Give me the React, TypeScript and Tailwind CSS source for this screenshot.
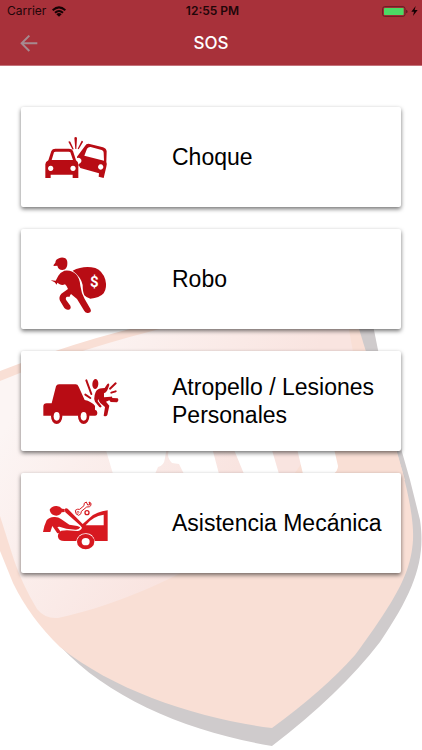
import type { ReactNode } from "react";

function CrashIcon() {
  return (
    <g fill="#b80c14" transform="translate(0 9)">
      <path
        fillRule="evenodd"
        d="M46 159V118Q46 110 55 106L64 78Q67 71 76 71H117Q126 71 129 78L138 106Q145 110 145 118V159H128V149H62V159ZM65 105H129L121 82Q120 80 116 80H77Q73 80 72 82ZM62 122a8 8 0 1 0 .1 0ZM129 122a8 8 0 1 0 .1 0Z"
      />
      <path
        fillRule="evenodd"
        d="M141 95L165 63Q169 55 179 57L219 67Q229 70 230 79L229 111Q232 117 229 125L221 159L206 155L207 145L151 129L148 124Q144 125 146 117Q156 113 154 104Q150 97 141 99ZM163 92L222 107L221 83Q221 77 215 75L182 66Q175 65 171 71ZM212 118a8 8 0 1 0 .1 0Z"
      />
      <path d="M133 38Q137 34 141 38L139 72H136ZM115 50Q118 47 121 50L131 72L128 74ZM155 47Q159 47 159 51L146 73L143 71Z" />
    </g>
  );
}

function ThiefIcon() {
  return (
    <g fill="#b80c14" transform="translate(15 18)">
      <path d="M61 38Q62 28 72 25Q81 20 91 25Q98 30 97 42Q97 59 82 60Q70 60 67 47L56 48Q54 45 61 38Z" />
      <path d="M47 91L62 92L70 77Q76 67 88 62Q110 59 123 73Q134 84 136 107Q139 130 149 147L166 176Q171 185 162 188Q153 191 148 183L126 147L108 132Q104 137 104 140L96 140Q90 143 94 151L106 167Q110 176 101 179Q94 181 88 174L75 152Q70 141 79 131L99 117Q96 108 90 103Q82 107 74 103L67 98L65 104L59 97Z" />
      <path d="M113 62Q145 46 181 54Q203 63 211 89Q217 113 206 130Q193 145 166 146Q155 144 148 136Q143 125 143 105Q139 82 113 62Z" />
      <text x="178" y="112" fill="white" textAnchor="middle" fontFamily="Roboto, sans-serif" fontWeight="700" fontSize="45">
        $
      </text>
    </g>
  );
}

function RunOverIcon() {
  return (
    <g fill="#b80c14">
      <path d="M40 147V121Q40 112 50 112H65L78 61Q80 55 87 55H137Q143 55 146 62L164 102Q184 106 195 120V131Q202 132 202 140Q202 149 195 149H40Z" />
      <ellipse cx="80" cy="151" rx="17" ry="23" />
      <ellipse cx="161" cy="151" rx="17" ry="23" />
      <ellipse cx="80" cy="151" rx="9" ry="13" fill="white" />
      <ellipse cx="161" cy="151" rx="9" ry="13" fill="white" />
      <ellipse cx="196" cy="54" rx="9" ry="15" transform="rotate(5 196 54)" />
      <path d="M197 78Q203 67 216 67L224 66L232 54Q237 50 238 57L232 73Q228 80 222 82L222 94L242 92Q247 91 247 96L263 97Q268 103 261 109L242 108L238 103L228 107L238 119L232 147Q228 154 221 149L225 123L211 111Q206 106 205 99L203 105L215 121Q213 126 208 123L195 107Q191 99 194 87Z" />
      <g fill="none" stroke="#b80c14" strokeWidth="6" strokeLinecap="round">
        <path d="M169 43L184 84M166 86L181 96M173 111L190 119M240 68L257 52M244 80L257 76" />
      </g>
    </g>
  );
}

function MechanicIcon() {
  return (
    <g fill="#d71920" transform="translate(0 6)">
      <path d="M59 59Q66 47 80 48Q90 49 96 56L104 57V66L95 67Q92 76 79 77Q65 77 60 64Z" />
      <path d="M39 126Q43 105 50 91Q57 82 72 81Q84 80 93 87L118 104L142 108L151 112Q147 120 136 119L109 116L88 110L82 111L89 121Q91 124 91 128L82 130L67 108L61 126Z" />
      <path d="M104 58Q107 52 113 56L158 102L181 82Q199 65 233 61V153H194Q191 131 168 130Q144 130 139 153H103Q86 153 84 141Q82 129 94 122L111 121L142 123Q153 122 156 113L150 106L106 67Z" />
      <path d="M167 106Q187 79 221 74V106Z" fill="white" />
      <ellipse cx="167" cy="155" rx="26" ry="23" />
      <ellipse cx="167" cy="155" rx="12" ry="11" fill="white" />
      <path
        d="M136 61Q142 56 149 58L162 47Q160 38 169 36L173 45L180 44L177 36Q185 37 183 46Q180 52 170 51L154 64Q155 73 146 76Q135 74 136 61Z"
        fill="white"
        stroke="#d71920"
        strokeWidth="3"
      />
      <circle cx="144" cy="67" r="3" fill="none" stroke="#d71920" strokeWidth="2" />
      <circle cx="171" cy="68" r="6" fill="white" stroke="#d71920" strokeWidth="4" />
    </g>
  );
}

function Shield() {
  return (
    <svg className="absolute inset-x-0 top-0 -z-10 w-full" viewBox="0 0 422 750" aria-hidden="true">
      <defs>
        <linearGradient id="gloss" gradientUnits="userSpaceOnUse" x1="10" y1="420" x2="190" y2="540">
          <stop offset="0" stopColor="#fcf5f4" />
          <stop offset="1" stopColor="#f9e4e0" />
        </linearGradient>
      </defs>
      <path
        fill="#cfcbcc"
        d="M340 310H370L378 350L402 452L410 480L420 520C426 560 414 592 380 642Q340 694 272 746C190 732 110 700 60 646Z"
      />
      <path
        fill="#f9dfd5"
        d="M0 371Q100 332 190 316L355 316L397 452C408 490 414 520 413 540C411 570 400 594 355 655Q324 690 272 728C200 719 116 692 60 647Q30 618 13 583L0 551Z"
      />
      <path
        fill="url(#gloss)"
        d="M0 381Q80 348 180 324L348 324L353 352Q325 460 251 527C200 570 120 605 58 618Q45 619 37 609Q22 584 14 560L0 516Z"
      />
      <path fill="#f9dfd5" d="M318 440L393 440L405 480L290 480Z" />
      <path
        fill="white"
        d="M103 440L168 440L165 458Q164 466 158 467L155 474H113ZM170 440H210L219 474H184L179 464L172 463Q166 457 169 450ZM230 440H269L279 474H244ZM295 440H332L338 466Q338 471 333 474H303Z"
      />
    </svg>
  );
}

const options: { label: string; icon: ReactNode }[] = [
  { label: "Choque", icon: <CrashIcon /> },
  { label: "Robo", icon: <ThiefIcon /> },
  { label: "Atropello / Lesiones Personales", icon: <RunOverIcon /> },
  { label: "Asistencia Mecánica", icon: <MechanicIcon /> },
];

export default function App() {
  return (
    <div className="relative isolate min-h-screen overflow-hidden bg-white font-['Inter',sans-serif] text-black">
      <Shield />
      <header className="border-b border-[#c4727a] bg-[#a8313a]">
        <div className="grid h-[22px] grid-cols-3 items-center pr-1 pl-[7px] text-[#210609]">
          <div className="flex items-center gap-[6px]">
            <span className="text-xs">Carrier</span>
            <svg className="h-[11px] w-[14px]" viewBox="0 0 42 32" aria-hidden="true">
              <g fill="none" stroke="#160204" strokeWidth="6">
                <path d="M2 12Q21-5 40 12M9 20Q21 9 33 20" />
              </g>
              <path fill="#160204" d="M13 24Q21 17 29 24L21 32Z" />
            </svg>
          </div>
          <span className="text-center text-xs font-semibold">12:55 PM</span>
          <div className="flex items-center justify-end gap-[3px]">
            <svg className="h-[11px] w-[26px]" viewBox="0 0 78 33" aria-hidden="true">
              <rect x="2" y="2" width="67" height="29" rx="6" fill="none" stroke="#651c23" strokeWidth="3" />
              <rect x="6" y="6" width="59" height="21" rx="2" fill="#4cd964" />
              <path fill="#651c23" d="M72 11Q77 12 77 17Q77 21 72 22Z" />
            </svg>
            <svg className="h-[10px] w-[7px]" viewBox="0 0 21 30" aria-hidden="true">
              <path fill="#160204" d="M14 0L1 17H9L6 30L20 12H11Z" />
            </svg>
          </div>
        </div>
        <div className="grid h-[43px] grid-cols-3 items-center px-5">
          <button type="button" aria-label="Volver" className="w-[18px]">
            <svg className="h-[18px] w-[18px]" viewBox="0 0 54 54" fill="none" stroke="#a68a90" strokeWidth="6" aria-hidden="true">
              <path d="M52 25H5M28 2L5 25L28 48" />
            </svg>
          </button>
          <h1 className="text-center text-[17px] font-medium text-white">SOS</h1>
        </div>
      </header>
      <main className="flex flex-col gap-[22px] px-[21px] py-[41px]">
        {options.map(({ label, icon }) => (
          <button
            key={label}
            type="button"
            className="flex h-[100px] w-full items-center gap-[42px] rounded-xs bg-white pl-[9px] text-left font-['Liberation_Sans',sans-serif] text-[23px] leading-[28px] shadow-[0_2px_4px_rgba(0,0,0,0.55)]"
          >
            <svg className="h-[70px] w-[100px] shrink-0" viewBox="0 0 300 210" aria-hidden="true">
              {icon}
            </svg>
            <span>{label}</span>
          </button>
        ))}
      </main>
    </div>
  );
}
